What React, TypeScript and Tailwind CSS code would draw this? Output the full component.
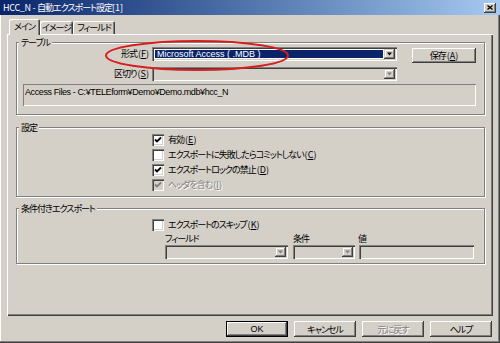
import React from "react";

function Check({ disabled }: { disabled?: boolean }) {
  return (
    <svg width="8" height="8" viewBox="0 0 8 8" className="block">
      <path d="M1 3.5 L3 5.5 L7 1.5" fill="none" stroke={disabled ? "#808080" : "#000"} strokeWidth="1.8" />
    </svg>
  );
}

function CheckBox({ checked, disabled }: { checked?: boolean; disabled?: boolean }) {
  return (
    <span
      className={
        "w-[12px] h-[12px] shrink-0 flex items-center justify-center shadow-[inset_1px_1px_0_#808080,inset_2px_2px_0_#404040,inset_-1px_-1px_0_#fff,inset_-2px_-2px_0_#d4d0c8] " +
        (disabled ? "bg-[#d4d0c8]" : "bg-white")
      }
    >
      {checked ? <Check disabled={disabled} /> : null}
    </span>
  );
}

function Arrow({ disabled }: { disabled?: boolean }) {
  return (
    <span className="w-[11px] h-full shrink-0 bg-[#d4d0c8] flex items-center justify-center shadow-[inset_-1px_-1px_0_#404040,inset_1px_1px_0_#d4d0c8,inset_-2px_-2px_0_#808080,inset_2px_2px_0_#fff]">
      <svg width="5" height="4" viewBox="0 0 5 4" className="block">
        <path d="M0 0.5 L5 0.5 L2.5 3.5 Z" fill={disabled ? "#808080" : "#000"} />
      </svg>
    </span>
  );
}

function Combo({
  className,
  disabled,
  children,
}: {
  className: string;
  disabled?: boolean;
  children?: React.ReactNode;
}) {
  return (
    <div
      className={
        "h-[14px] flex p-[2px] shadow-[inset_1px_1px_0_#808080,inset_2px_2px_0_#404040,inset_-1px_-1px_0_#fff,inset_-2px_-2px_0_#d4d0c8] " +
        (disabled ? "bg-[#d4d0c8] " : "bg-white ") +
        className
      }
    >
      <div className="flex-1 min-w-0 flex">{children}</div>
      <Arrow disabled={disabled} />
    </div>
  );
}

function Btn({
  label,
  className,
  disabled,
  isDefault,
}: {
  label: React.ReactNode;
  className: string;
  disabled?: boolean;
  isDefault?: boolean;
}) {
  const raised =
    "bg-[#d4d0c8] flex items-center justify-center whitespace-nowrap shadow-[inset_-1px_-1px_0_#404040,inset_1px_1px_0_#fff,inset_-2px_-2px_0_#808080,inset_2px_2px_0_#d4d0c8]";
  const text = (
    <span
      className={
        disabled
          ? "text-[#808080] [text-shadow:1px_1px_0_#fff]"
          : "text-black"
      }
    >
      {label}
    </span>
  );
  if (isDefault) {
    return (
      <div className={"border border-black flex " + className}>
        <div className={"flex-1 " + raised}>{text}</div>
      </div>
    );
  }
  return <div className={raised + " " + className}>{text}</div>;
}

function Group({
  label,
  className,
  children,
}: {
  label: string;
  className: string;
  children?: React.ReactNode;
}) {
  return (
    <div
      className={
        "relative border border-[#808080] shadow-[inset_1px_1px_0_#fff,1px_1px_0_#fff] " +
        className
      }
    >
      <span className="absolute left-[2px] top-[-6px] px-[2px] bg-[#d4d0c8] leading-[11px] whitespace-nowrap">
        {label}
      </span>
      {children}
    </div>
  );
}

function M({ c }: { c: string }) {
  return (
    <span className="tracking-normal pl-[1px]">
      (<span className="underline underline-offset-[1px]">{c}</span>)
    </span>
  );
}

export default function App() {
  return (
    <div className="relative w-[500px] h-[343px] overflow-hidden bg-[#d4d0c8] flex flex-col text-black font-['Noto_Sans_CJK_JP',sans-serif] text-[9px] tracking-[-1px] leading-none [font-feature-settings:'palt'_1] shadow-[inset_-1px_-1px_0_#404040,inset_-2px_-2px_0_#808080,inset_1px_0_0_#fff]">
      {/* title bar */}
      <div className="h-[15px] shrink-0 flex items-center justify-between bg-linear-to-r from-[#0a246a] to-[#a6caf0] pl-[3px] pr-[4px]">
        <span className="text-white text-[9px] leading-none whitespace-nowrap">
          <span className="tracking-[-0.3px]">HCC_N - </span>自動エクスポート設定<span className="tracking-normal">[1]</span>
        </span>
        <span className="w-[12px] h-[10px] bg-[#d4d0c8] flex items-center justify-center shadow-[inset_-1px_-1px_0_#404040,inset_1px_1px_0_#fff,inset_-2px_-2px_0_#808080]">
          <svg width="6" height="5" viewBox="0 0 6 5" className="block">
            <path d="M0.5 0.5 L5.5 4.5 M5.5 0.5 L0.5 4.5" stroke="#000" strokeWidth="1.3" />
          </svg>
        </span>
      </div>

      {/* tabs */}
      <div className="mt-[4px] h-[15px] shrink-0 flex items-end pl-[9px] relative z-10 whitespace-nowrap">
        <div className="h-[16px] -mb-px w-[31px] bg-[#d4d0c8] rounded-t-[2px] flex items-center justify-center pb-[2px] shadow-[inset_1px_1px_0_#fff,inset_-1px_0_0_#404040,inset_-2px_0_0_#808080]">
          メイン
        </div>
        <div className="h-[13px] w-[33px] rounded-t-[2px] flex items-center justify-center shadow-[inset_1px_1px_0_#fff,inset_-1px_0_0_#404040,inset_-2px_0_0_#808080]">
          イメージ
        </div>
        <div className="h-[13px] w-[42px] rounded-t-[2px] flex items-center justify-center shadow-[inset_1px_1px_0_#fff,inset_-1px_0_0_#404040,inset_-2px_0_0_#808080]">
          フィールド
        </div>
      </div>

      {/* panel */}
      <div className="ml-[7px] w-[486px] h-[282px] shrink-0 pl-[9px] pr-[8px] pt-[8px] shadow-[inset_1px_1px_0_#fff,inset_-1px_-1px_0_#404040,inset_-2px_-2px_0_#808080]">
        <Group label="テーブル" className="h-[73px] pt-[4px]">
          <div className="flex items-start h-[16px]">
            <span className="w-[133px] text-right leading-[14px] pr-[1px] whitespace-nowrap">
              形式<M c="F" />
            </span>
            <Combo className="ml-[2px] w-[245px]">
              <div className="flex-1 m-[1px] bg-[#0a246a] text-white font-['Liberation_Sans',sans-serif] text-[9px] tracking-normal leading-[8px] pl-[2px] flex items-center whitespace-nowrap">
                Microsoft Access ( .MDB )
              </div>
            </Combo>
            <Btn
              className="ml-[15px] mt-[1px] w-[64px] h-[15px]"
              label={
                <>
                  保存<M c="A" />
                </>
              }
            />
          </div>
          <div className="flex items-start h-[14px] mt-[4px]">
            <span className="w-[133px] text-right leading-[14px] pr-[1px] whitespace-nowrap">
              区切り<M c="S" />
            </span>
            <Combo className="ml-[2px] w-[245px]" disabled />
          </div>
          <div className="mt-[3px] ml-[6px] w-[453px] h-[22px] pl-[2px] pt-[3px] font-['Liberation_Sans',sans-serif] text-[9px] tracking-[-0.4px] leading-[10px] whitespace-nowrap shadow-[inset_1px_1px_0_#808080,inset_-1px_-1px_0_#fff]">
            Access Files - C:¥TELEform¥Demo¥Demo.mdb¥hcc_N
          </div>
        </Group>

        <Group label="設定" className="mt-[12px] h-[70px] pt-[4px]">
          <div className="h-[15px] flex items-center pl-[135px] gap-[4px] whitespace-nowrap">
            <CheckBox checked />
            <span>
              有効<M c="E" />
            </span>
          </div>
          <div className="h-[15px] flex items-center pl-[135px] gap-[4px] whitespace-nowrap">
            <CheckBox />
            <span>
              エクスポートに失敗したらコミットしない<M c="C" />
            </span>
          </div>
          <div className="h-[15px] flex items-center pl-[135px] gap-[4px] whitespace-nowrap">
            <CheckBox checked />
            <span>
              エクスポートロックの禁止<M c="D" />
            </span>
          </div>
          <div className="h-[15px] flex items-center pl-[135px] gap-[4px] whitespace-nowrap">
            <CheckBox checked disabled />
            <span className="text-[#808080] [text-shadow:1px_1px_0_#fff]">
              ヘッダを含む<M c="I" />
            </span>
          </div>
        </Group>

        <Group label="条件付きエクスポート" className="mt-[11px] h-[56px] pt-[8px]">
          <div className="h-[15px] flex items-center pl-[135px] gap-[4px] whitespace-nowrap">
            <CheckBox />
            <span>
              エクスポートのスキップ<M c="K" />
            </span>
          </div>
          <div className="flex pl-[148px] whitespace-nowrap">
            <div className="w-[123px] flex flex-col">
              <span className="h-[13px] flex items-center">フィールド</span>
              <Combo className="w-[123px]" disabled />
            </div>
            <div className="ml-[5px] w-[62px] flex flex-col">
              <span className="h-[13px] flex items-center">条件</span>
              <Combo className="w-[62px]" disabled />
            </div>
            <div className="ml-[4px] w-[115px] flex flex-col">
              <span className="h-[13px] flex items-center -ml-[1px]">値</span>
              <div className="h-[14px] w-[115px] shadow-[inset_1px_1px_0_#808080,inset_2px_2px_0_#404040,inset_-1px_-1px_0_#fff,inset_-2px_-2px_0_#d4d0c8]" />
            </div>
          </div>
        </Group>
      </div>

      {/* buttons */}
      <div className="mt-[5px] h-[16px] shrink-0 flex justify-end pr-[8px] gap-[6px]">
        <Btn isDefault className="w-[62px] h-[16px]" label={<span className="font-['Liberation_Sans',sans-serif] tracking-normal">OK</span>} />
        <Btn className="w-[62px] h-[16px]" label="キャンセル" />
        <Btn className="w-[62px] h-[16px]" label="元に戻す" disabled />
        <Btn className="w-[62px] h-[16px]" label="ヘルプ" />
      </div>

      {/* red annotation ellipse */}
      <svg
        className="absolute left-0 top-0 pointer-events-none"
        width="500"
        height="343"
        viewBox="0 0 500 343"
      >
        <ellipse cx="197" cy="55.5" rx="91" ry="14.5" fill="none" stroke="#d81e1e" strokeWidth="2" />
      </svg>
    </div>
  );
}
